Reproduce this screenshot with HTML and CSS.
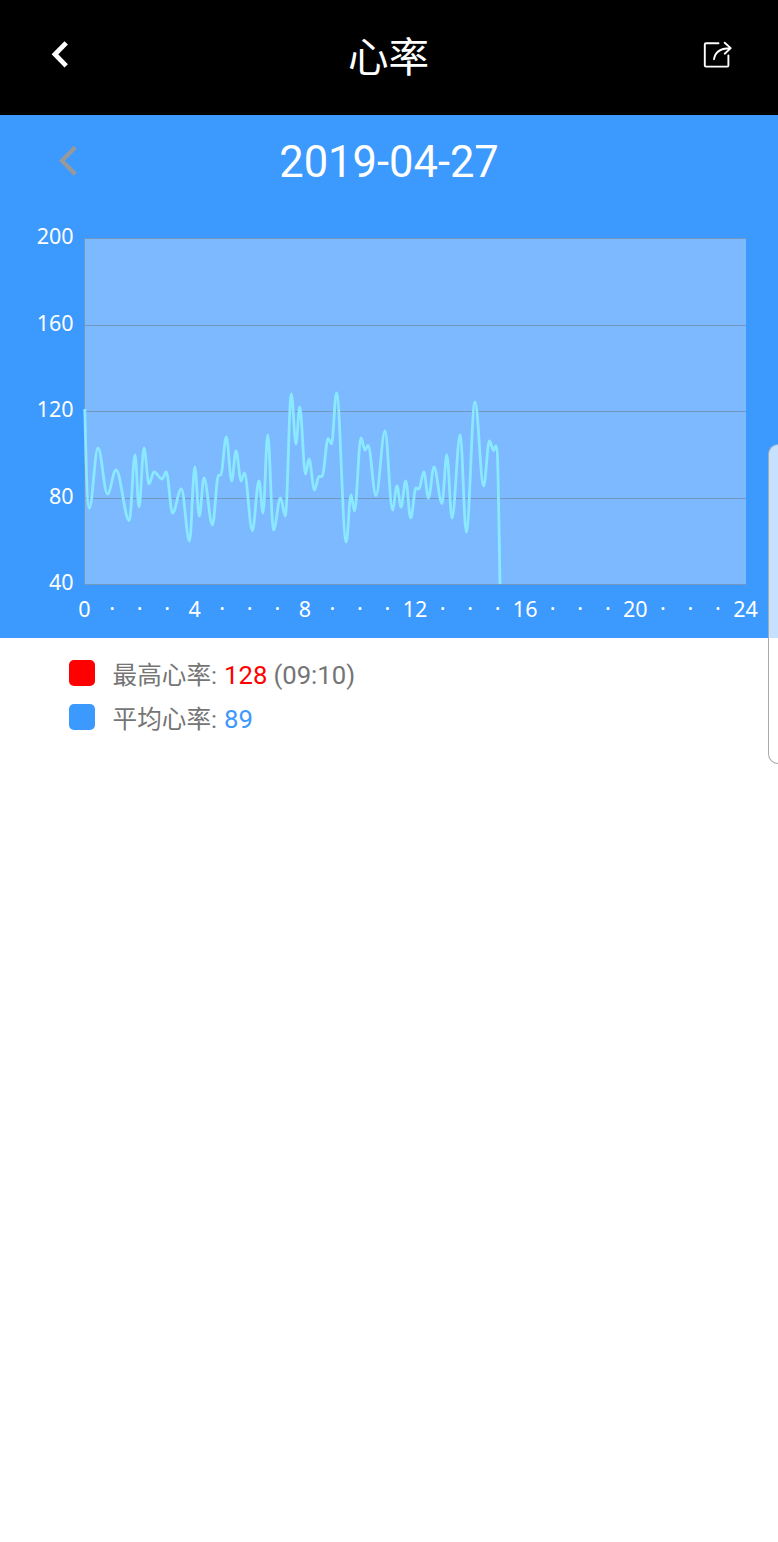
FILE: index.html
```
<!DOCTYPE html>
<html lang="zh-CN">

<head>
    <meta charset="UTF-8">
    <title>心率</title>
    <link rel="stylesheet" href="styles.css">
</head>

<body>
    <div class="header">
        <svg class="back" width="20" height="28" viewBox="0 0 20 28">
            <path d="M16.2 2.8 L5 14.3 L16.2 25.8" />
        </svg>
        <h1>心率</h1>
        <svg class="share" width="32" height="32" viewBox="0 0 32 32">
            <path d="M16.5 4.2 H4 Q2.8 4.2 2.8 5.4 V26.4 Q2.8 27.6 4 27.6 H25.2 Q26.4 27.6 26.4 26.4 V16.5" />
            <path d="M12 20.2 C13 13.5 17 9.4 27.6 9.2 M22.7 3.7 L28.7 9.1 L22.7 14.7" />
        </svg>
    </div>
    <div class="panel">
        <div class="date_bar">
            <svg class="prev" width="22" height="32" viewBox="0 0 22 32">
                <path d="M18.3 2.2 L4.9 15.7 L18.3 29.2" />
            </svg>
            <span class="date">2019-04-27</span>
        </div>
        <svg class="chart" id="chart" width="778" height="428" viewBox="0 210 778 428">
            <rect class="plot" x="85" y="238" width="661" height="347" />
            <g id="grid"></g>
            <path class="line" id="line" />
        </svg>
    </div>
    <ul class="legend">
        <li><i class="mark red"></i><span>最高心率: <b class="max">128</b> <b>(09:10)</b></span></li>
        <li><i class="mark blue"></i><span>平均心率: <b class="avg">89</b></span></li>
    </ul>
    <div class="edge_handle"></div>
    <script type="text/javascript" src="chart.js"></script>
</body>

</html>
```
FILE: styles.css
```
* {
    margin: 0;
    padding: 0;
    list-style: none;
    box-sizing: border-box;
}

body {
    position: relative;
    min-height: 1542px;
    background: #fff;
    font-family: Roboto, "Noto Sans CJK SC", sans-serif;
    overflow-x: hidden;
}

svg {
    display: block;
    fill: none;
}

.header {
    height: 115px;
    padding: 0 44px 0 50px;
    background: #000;
    color: #fff;
    display: grid;
    grid-template-columns: 1fr 80px 1fr;
    align-items: center;
}

.header h1 {
    margin-left: -4px;
    font-size: 40.6px;
    font-weight: 400;
    line-height: 60px;
    white-space: nowrap;
}

.back {
    margin-bottom: 7px;
    stroke: #fff;
    stroke-width: 4.8;
}

.share {
    justify-self: end;
    margin-bottom: 6px;
    stroke: #fff;
    stroke-width: 1.9;
    stroke-linecap: round;
    stroke-linejoin: round;
}

.panel {
    height: 523px;
    background: #3c99fd;
}

.date_bar {
    height: 95px;
    padding: 0 57px;
    display: grid;
    grid-template-columns: 1fr auto 1fr;
    align-items: center;
}

.prev {
    margin-bottom: 4px;
    stroke: #999;
    stroke-width: 4.2;
}

.date {
    color: #fff;
    font-size: 43.5px;
    line-height: 50px;
}

.plot {
    fill: #7db9ff;
}

.rule {
    stroke: #7497bf;
    stroke-width: 1;
}

.line {
    stroke: #8ae9ff;
    stroke-width: 2.8;
    stroke-linejoin: round;
}

.tick {
    fill: #fff;
    font-family: "Noto Sans", sans-serif;
    font-size: 21.5px;
}

.legend {
    padding: 15px 0 0 69px;
    color: #757575;
    font-size: 24.6px;
}

.legend li {
    height: 44px;
    display: flex;
    align-items: center;
    gap: 17.6px;
}

.legend span {
    margin-bottom: 4px;
}

.legend b {
    font-size: 25.7px;
    font-weight: 400;
}

.mark {
    width: 26px;
    height: 26px;
    margin-bottom: 4px;
    border-radius: 5px;
}

.red {
    background: #f00;
}

.blue {
    background: #3c99fd;
}

.legend .max {
    margin-left: 1px;
    color: #f00;
}

.legend .avg {
    margin-left: 1px;
    color: #3c99fd;
}

/* translucent handle over the right edge */
.edge_handle {
    position: absolute;
    top: 444px;
    right: 0;
    width: 10px;
    height: 320px;
    border: 1px solid #aaa;
    border-top-color: #8db5e4;
    border-right: 0;
    border-radius: 11px 0 0 11px;
    background: rgba(255, 255, 255, 0.7);
}
```
FILE: chart.js
```
var NS = 'http://www.w3.org/2000/svg';
var grid = document.getElementById('grid');
var left = 84.5, right = 745.5, top_y = 238.5, bottom = 584.5;

function addLine(x1, y1, x2, y2) {
    var l = document.createElementNS(NS, 'line');
    l.setAttribute('class', 'rule');
    l.setAttribute('x1', x1);
    l.setAttribute('y1', y1);
    l.setAttribute('x2', x2);
    l.setAttribute('y2', y2);
    grid.appendChild(l);
}

function addText(x, y, text, anchor) {
    var t = document.createElementNS(NS, 'text');
    t.setAttribute('class', 'tick');
    t.setAttribute('x', x);
    t.setAttribute('y', y);
    t.setAttribute('text-anchor', anchor);
    t.textContent = text;
    grid.appendChild(t);
}

//1.纵轴
for (var v = 40; v <= 200; v += 40) {
    var y = bottom - (v - 40) / 160 * (bottom - top_y);
    y = Math.floor(y) + 0.5;
    addLine(left, y, right + 0.5, y);
    addText(73.6, y + 5.5, v, 'end');
}
addLine(left, top_y, left, bottom);

//2.横轴，每4小时一个数字
for (var h = 0; h <= 24; h++) {
    addText(left + h * (right - left) / 24, h % 4 ? 616 : 616.5, h % 4 ? '·' : h, 'middle');
}

//3.心率曲线
var points = [
    [89.3, 508], [98, 448], [107.5, 494], [116, 470], [129.3, 520.5],
    [135, 455], [139, 507], [144, 448], [149, 484], [154, 472], [162, 479],
    [166.3, 472], [172.5, 513], [181.3, 489], [189.5, 541], [194.8, 467], [199.3, 516],
    [204, 478], [212.4, 525], [218.5, 475.5], [220.7, 475], [226.3, 437], [231.7, 481],
    [236, 451], [241.2, 481], [244.4, 473], [252.3, 530.5], [259, 481], [263, 513],
    [267.7, 435], [273.5, 530], [280.5, 498], [285.3, 516], [291.3, 394], [296, 444],
    [299.7, 407], [305.5, 474], [309, 459], [314.5, 490], [319, 476.5], [322, 476.5],
    [328.2, 438.5], [331.5, 444], [336.5, 393], [346.2, 542], [351, 495], [354.5, 511],
    [361, 438], [365, 450], [368, 445.5], [376, 495.5], [385, 431], [392.5, 510],
    [397, 486], [401, 507], [405.7, 481], [410.7, 518], [416, 488], [419, 489],
    [423.8, 472], [428.5, 498], [434, 467], [442, 503.5], [446.8, 455], [452, 518],
    [460.2, 435], [466.3, 532], [475, 402], [483.6, 486], [489.4, 441], [493.7, 450.5],
    [495.7, 446]
];
var d = 'M84.8 409 C85.8 450 87 508 ' + points[0];
for (var i = 1; i < points.length; i++) {
    var a = points[i - 1], b = points[i];
    var dx = (b[0] - a[0]) * 0.36;
    d += ' C' + [a[0] + dx, a[1], b[0] - dx, b[1], b[0], b[1]];
}
d += ' C498 446 498 472 500 584';
document.getElementById('line').setAttribute('d', d);
```
